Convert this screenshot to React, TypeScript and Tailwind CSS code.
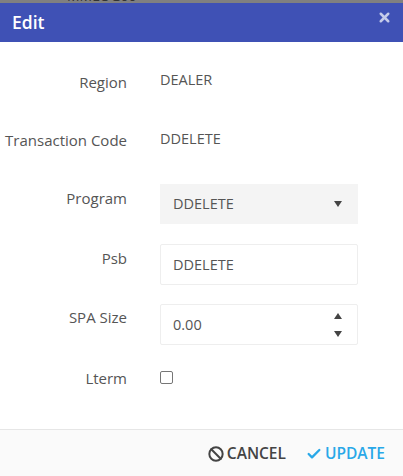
import { Ban, Check, X } from 'lucide-react';

const font = { fontFamily: '"Open Sans", "Noto Sans", sans-serif' };

function Label({ children }: { children: string }) {
  return <div className="w-[127px] shrink-0 text-right text-[15px] text-[#555]">{children}</div>;
}

export default function App() {
  return (
    <div className="flex h-[476px] w-[403px] flex-col overflow-hidden bg-white" style={font}>
      <div className="h-[3px] shrink-0 overflow-hidden bg-[#808080] pl-[67px]">
        <div className="mt-[-12px] text-[14px] leading-[16px] text-[#333]">MMLOG00</div>
      </div>
      <div className="flex h-[39px] shrink-0 items-start justify-between bg-[#3f51b5] pl-3 pr-[11px]">
        <span className="mt-[7px] text-[17.5px] font-semibold leading-[24px] text-white">Edit</span>
        <X className="mt-[7px] text-[#c5cbe9]" size={15} strokeWidth={4} />
      </div>
      <div className="flex flex-1 flex-col">
        <div className="mt-[28px] flex h-[24px] items-center gap-[33px]">
          <Label>Region</Label>
          <span className="mt-[-4px] text-[14.5px] text-[#555]">DEALER</span>
        </div>
        <div className="mt-[34px] flex h-[24px] items-center gap-[33px]">
          <Label>Transaction Code</Label>
          <span className="mt-[-3px] text-[14.5px] text-[#555]">DDELETE</span>
        </div>
        <div className="mt-[32px] flex items-start gap-[33px]">
          <div className="mt-[3px]"><Label>Program</Label></div>
          <div className="flex h-[40px] w-[198px] items-center justify-between bg-[#f4f4f4] pl-[13px] pr-[16px] text-[14.5px] text-[#555]">
            <span>DDELETE</span>
            <svg width="8" height="6" viewBox="0 0 8 6"><path d="M0 0h8L4 6z" fill="#444" /></svg>
          </div>
        </div>
        <div className="mt-[20px] flex items-start gap-[33px]">
          <div className="mt-[3px]"><Label>Psb</Label></div>
          <div className="flex h-[41px] w-[198px] items-center rounded-[2px] border border-[#eeeeee] pl-[12px] text-[14.5px] text-[#555]">
            DDELETE
          </div>
        </div>
        <div className="mt-[19px] flex items-start gap-[33px]">
          <div className="mt-[2px]"><Label>SPA Size</Label></div>
          <div className="flex h-[41px] w-[198px] items-center justify-between rounded-[2px] border border-[#eeeeee] pl-[12px] pr-[15px] text-[14.5px] text-[#555]">
            <span>0.00</span>
            <div className="flex flex-col gap-[12px]">
              <svg width="8" height="6" viewBox="0 0 8 6"><path d="M0 6h8L4 0z" fill="#444" /></svg>
              <svg width="8" height="6" viewBox="0 0 8 6"><path d="M0 0h8L4 6z" fill="#444" /></svg>
            </div>
          </div>
        </div>
        <div className="mt-[22px] flex items-center gap-[33px]">
          <Label>Lterm</Label>
          <div className="mt-[-2px] h-[13px] w-[13px] rounded-[2px] border border-[#767676] bg-white" />
        </div>
      </div>
      <div className="flex h-[47px] shrink-0 items-center justify-end gap-[20px] border-t border-[#e6e6e6] bg-[#fafafa] pr-[18px] pt-[1px] text-[15.5px] font-semibold">
        <div className="flex items-center gap-[3px] text-[#444]">
          <Ban size={16} strokeWidth={3} />
          <span>CANCEL</span>
        </div>
        <div className="flex items-center gap-[3px] text-[#29a8e8]">
          <Check size={16} strokeWidth={3.5} />
          <span>UPDATE</span>
        </div>
      </div>
    </div>
  );
}
